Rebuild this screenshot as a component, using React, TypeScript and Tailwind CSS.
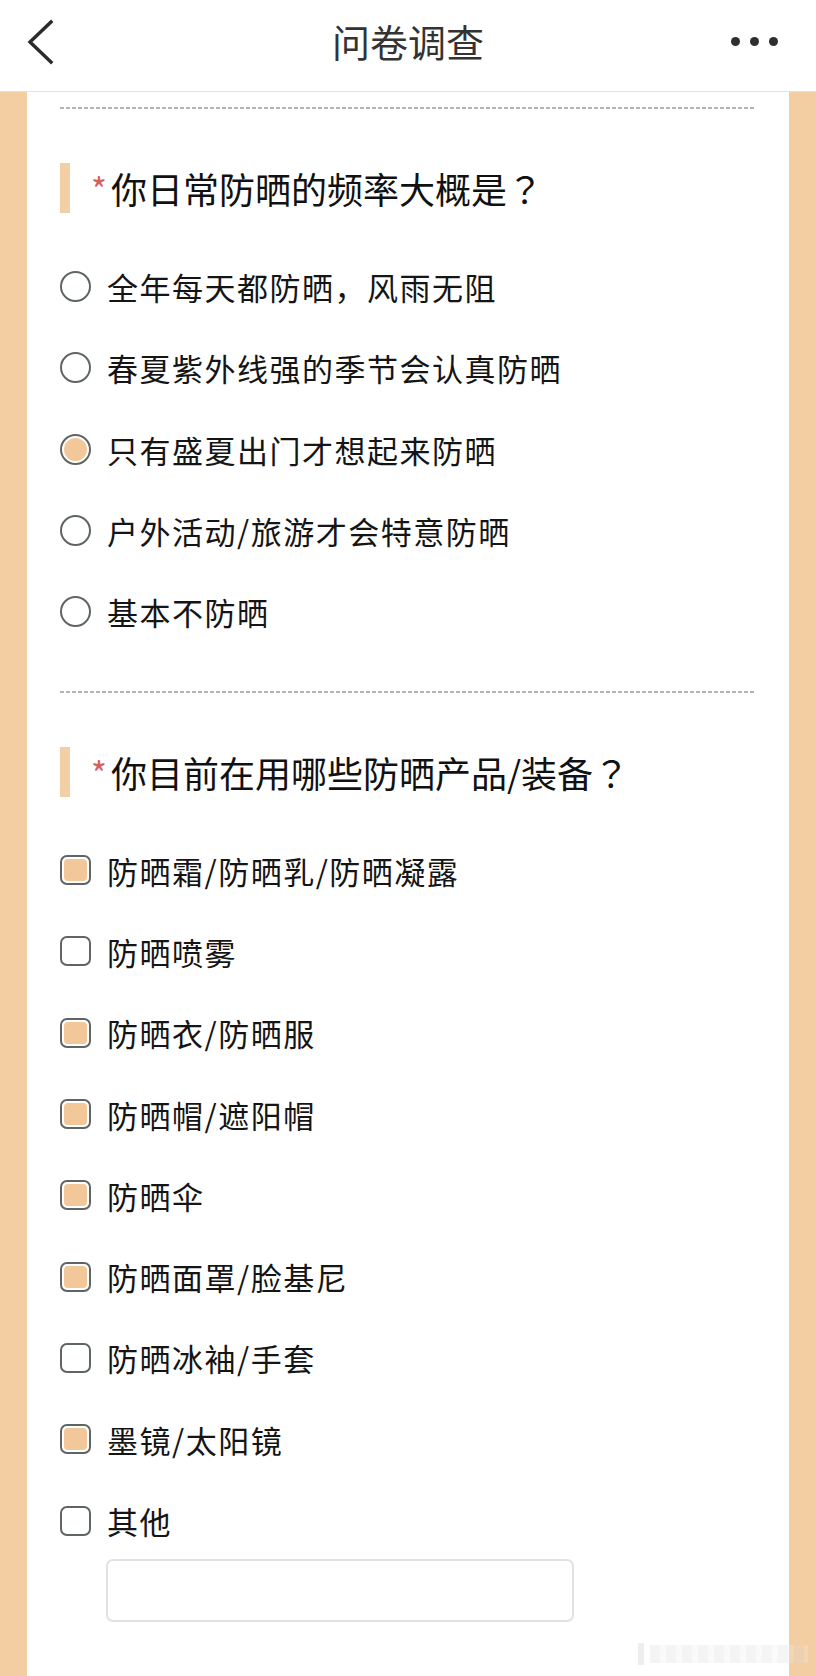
import { ReactNode } from "react";

const FONT = "font-['Noto_Sans_CJK_SC','Noto_Sans',sans-serif]";

const frequencyOptions = [
  { label: "全年每天都防晒，风雨无阻", checked: false },
  { label: "春夏紫外线强的季节会认真防晒", checked: false },
  { label: "只有盛夏出门才想起来防晒", checked: true },
  { label: "户外活动/旅游才会特意防晒", checked: false },
  { label: "基本不防晒", checked: false },
];

const productOptions = [
  { label: "防晒霜/防晒乳/防晒凝露", checked: true },
  { label: "防晒喷雾", checked: false },
  { label: "防晒衣/防晒服", checked: true },
  { label: "防晒帽/遮阳帽", checked: true },
  { label: "防晒伞", checked: true },
  { label: "防晒面罩/脸基尼", checked: true },
  { label: "防晒冰袖/手套", checked: false },
  { label: "墨镜/太阳镜", checked: true },
  { label: "其他", checked: false },
];

function DashedLine() {
  return (
    <div className="h-[2px] w-full bg-[repeating-linear-gradient(to_right,#b4b4b4_0_4px,transparent_4px_6px)]" />
  );
}

function QuestionTitle({ children }: { children: ReactNode }) {
  return (
    <div className="mt-[54px] flex h-[50px] items-center">
      <div className="h-[50px] w-[10px] shrink-0 bg-[#f3cfa6]" />
      <span className="ml-[21px] mt-[2px] w-[20px] text-[34px] leading-none text-[#d8605c]">*</span>
      <span className="text-[36px] leading-none text-[#111]">
        {children}
        <span className="font-['Noto_Sans_CJK_TC',sans-serif]">？</span>
      </span>
    </div>
  );
}

function Radio({ checked }: { checked: boolean }) {
  return (
    <div className="flex h-[31px] w-[31px] shrink-0 items-center justify-center rounded-full border-[2.5px] border-[#5f6464] bg-white">
      {checked ? <div className="h-[23px] w-[23px] rounded-full bg-[#f2c89b]" /> : null}
    </div>
  );
}

function Checkbox({ checked }: { checked: boolean }) {
  return (
    <div className="flex h-[30px] w-[31px] shrink-0 items-center justify-center rounded-[7px] border-[2.5px] border-[#5f6464] bg-white">
      {checked ? <div className="h-[22px] w-[23px] rounded-[4px] bg-[#f2c89b]" /> : null}
    </div>
  );
}

function OptionRow({ label, control }: { label: string; control: ReactNode }) {
  return (
    <div className="flex h-[81.3px] items-center">
      {control}
      <span className="ml-[16px] text-[31px] leading-none tracking-[1.5px] text-[#151515]">{label}</span>
    </div>
  );
}

export default function App() {
  return (
    <div className={`relative flex h-[1676px] w-[816px] flex-col overflow-hidden bg-[#f4cea3] ${FONT}`}>
      <header className="relative flex h-[92px] shrink-0 items-center justify-center border-b border-[#e2e2e2] bg-white">
        <svg className="absolute left-[24px] top-[18px]" width="34" height="48" viewBox="0 0 34 48" fill="none">
          <path d="M27 4 L6 24 L27 44" stroke="#2b2b2b" strokeWidth="3.4" strokeLinecap="square" />
        </svg>
        <h1 className="-mt-[10px] text-[38px] font-normal text-[#333]">问卷调查</h1>
        <div className="absolute right-[38px] top-[37px] flex gap-[10px]">
          <span className="h-[9px] w-[9px] rounded-full bg-[#2f2f2f]" />
          <span className="h-[9px] w-[9px] rounded-full bg-[#2f2f2f]" />
          <span className="h-[9px] w-[9px] rounded-full bg-[#2f2f2f]" />
        </div>
      </header>

      <main className="mx-[27px] flex-1 bg-white pl-[33px] pr-[34px] pt-[15px]">
        <DashedLine />

        <QuestionTitle>你日常防晒的频率大概是</QuestionTitle>
        <div className="mt-[33px]">
          {frequencyOptions.map((opt) => (
            <OptionRow key={opt.label} label={opt.label} control={<Radio checked={opt.checked} />} />
          ))}
        </div>

        <div className="mt-[39px]">
          <DashedLine />
        </div>

        <QuestionTitle>你目前在用哪些防晒产品/装备</QuestionTitle>
        <div className="mt-[32px]">
          {productOptions.map((opt) => (
            <OptionRow key={opt.label} label={opt.label} control={<Checkbox checked={opt.checked} />} />
          ))}
        </div>

        <div className="ml-[46px] -mt-[2px] h-[63px] w-[468px] rounded-[7px] border-2 border-[#e1e1e1] bg-white" />
      </main>

      <div className="pointer-events-none absolute bottom-[8px] right-[8px] flex h-[28px] w-[170px] items-center gap-[6px] opacity-25">
        <div className="h-[22px] w-[6px] bg-[#bdbdbd]" />
        <div className="h-[18px] flex-1 bg-[repeating-linear-gradient(to_right,#d6d6d6_0_10px,#ececec_10px_16px)]" />
      </div>
    </div>
  );
}
